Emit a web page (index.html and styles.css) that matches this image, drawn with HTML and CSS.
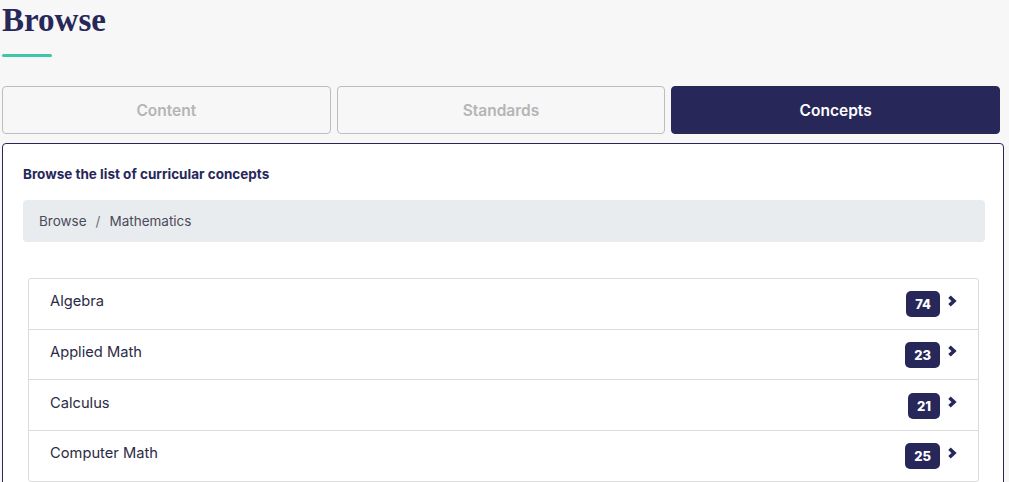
FILE: index.html
```html
<!DOCTYPE html>
<html lang="en">
<head>
    <meta charset="UTF-8">
    <title>Browse</title>
    <link rel="stylesheet" href="styles.css">
</head>
<body>

<h1>Browse</h1>
<div class="rule"></div>

<div class="tabs">
    <button class="tab">Content</button>
    <button class="tab">Standards</button>
    <button class="tab active">Concepts</button>
</div>

<div class="panel">
    <p class="intro">Browse the list of curricular concepts</p>
    <div class="crumbs">
        <span>Browse</span>
        <span class="sep">/</span>
        <span>Mathematics</span>
    </div>

    <ul class="concepts">
        <li>
            <span class="name">Algebra</span>
            <span class="badge">74</span>
            <svg class="chev" viewBox="0 0 10 12"><path d="M2.5 1.8 L7 6 L2.5 10.2"/></svg>
        </li>
        <li>
            <span class="name">Applied Math</span>
            <span class="badge">23</span>
            <svg class="chev" viewBox="0 0 10 12"><path d="M2.5 1.8 L7 6 L2.5 10.2"/></svg>
        </li>
        <li>
            <span class="name">Calculus</span>
            <span class="badge">21</span>
            <svg class="chev" viewBox="0 0 10 12"><path d="M2.5 1.8 L7 6 L2.5 10.2"/></svg>
        </li>
        <li>
            <span class="name">Computer Math</span>
            <span class="badge">25</span>
            <svg class="chev" viewBox="0 0 10 12"><path d="M2.5 1.8 L7 6 L2.5 10.2"/></svg>
        </li>
    </ul>
</div>

</body>
</html>
```

FILE: styles.css
```css
body {
    font-family: Inter, "Open Sans", sans-serif;
    background: #f7f7f7;
    margin: 0;
    padding: 0 5px 0 2px;
    color: #272759;
}
h1 {
    font-family: "Liberation Serif", serif;
    font-size: 33px;
    font-weight: bold;
    line-height: 40px;
    margin: 0;
    color: #272759;
}
.rule {
    width: 50px;
    height: 3px;
    border-radius: 2px;
    background: #3cc8a8;
    margin-top: 14px;
}
.tabs {
    display: grid;
    grid-template-columns: 1fr 1fr 1fr;
    gap: 6px;
    margin: 29px 4px 0 0;
}
.tab {
    height: 48px;
    background: #f7f7f7;
    border: 1px solid #bdbdbd;
    border-radius: 4px;
    font-family: Inter, sans-serif;
    font-size: 15.5px;
    font-weight: 600;
    color: #b5b5b5;
    cursor: pointer;
}
.tab.active {
    background: #272759;
    border-color: #272759;
    color: #ffffff;
}
.panel {
    margin-top: 9px;
    background: #ffffff;
    border: 1px solid #272759;
    border-radius: 4px;
    padding: 21px 18px 20px 20px;
}
.intro {
    margin: 0;
    font-size: 13.5px;
    font-weight: 700;
    line-height: 18px;
}
.crumbs {
    margin-top: 17px;
    height: 42px;
    background: #e9ecef;
    border-radius: 4px;
    padding: 0 16px;
    display: flex;
    align-items: center;
    gap: 9px;
    font-size: 13.5px;
    color: #4a4a5a;
}
.sep {
    color: #6c6c7a;
}
.concepts {
    list-style: none;
    margin: 36px 6px 0 5px;
    padding: 0;
    border: 1px solid #dcdcdc;
    border-radius: 3px;
}
.concepts li {
    display: flex;
    align-items: center;
    height: 49.67px;
    padding: 0 21px 0 21px;
    border-top: 1px solid #dcdcdc;
    font-size: 14.7px;
    color: #2b2b45;
}
.concepts li:first-child {
    border-top: none;
}
.name {
    flex: 1;
    margin-top: -5px;
}
.badge {
    background: #272759;
    color: #ffffff;
    font-size: 13px;
    font-weight: 800;
    line-height: 26px;
    padding: 0 9px;
    border-radius: 5px;
    margin-top: 1px;
}
.chev {
    width: 10px;
    height: 12px;
    margin-left: 7px;
    margin-top: -6px;
    fill: none;
    stroke: #272759;
    stroke-width: 3.6;
}
```
